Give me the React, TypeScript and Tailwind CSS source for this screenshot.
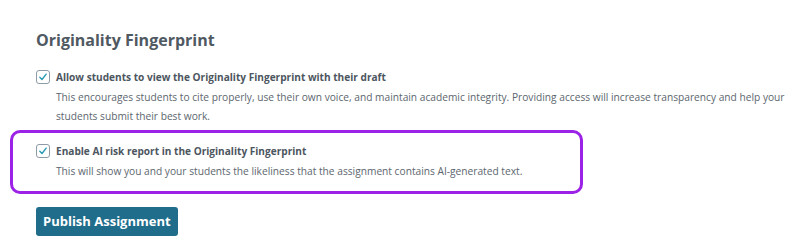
import React from "react";

function Check() {
  return (
    <span className="mt-[1px] flex h-[14px] w-[14px] shrink-0 items-center justify-center rounded-[3px] border border-[#8c9ba6] bg-white">
      <svg viewBox="0 0 12 12" className="h-[10px] w-[10px]">
        <path
          d="M2.2 6.4 L4.8 9 L9.8 2.6"
          fill="none"
          stroke="#2a9ab5"
          strokeWidth="1.7"
          strokeLinecap="round"
          strokeLinejoin="round"
        />
      </svg>
    </span>
  );
}

function Option({ title, children }: { title: string; children: React.ReactNode }) {
  return (
    <div className="flex gap-[6px]">
      <Check />
      <div>
        <p className="text-[10.1px] font-bold leading-[16px] text-[#4c5660]">{title}</p>
        <p className="mt-[3px] text-[10.2px] leading-[19px] text-[#5c666e]">{children}</p>
      </div>
    </div>
  );
}

export default function App() {
  return (
    <div
      className="h-[251px] w-[800px] bg-white pl-[10px] pt-[28px]"
      style={{ fontFamily: '"Open Sans", "Liberation Sans", sans-serif' }}
    >
      <h2 className="pl-[26px] text-[16px] font-bold leading-[24px] text-[#4f5962]">
        Originality Fingerprint
      </h2>
      <div className="mt-[17px] pl-[26px] pr-[8px]">
        <Option title="Allow students to view the Originality Fingerprint with their draft">
          This encourages students to cite properly, use their own voice, and maintain academic integrity. Providing access will increase transparency and help your students submit their best work.
        </Option>
      </div>
      <div className="mt-[4px] w-[573px] rounded-[10px] border-[3px] border-[#9b22e6] pb-[10px] pl-[23px] pt-[10px]">
        <Option title="Enable AI risk report in the Originality Fingerprint">
          This will show you and your students the likeliness that the assignment contains AI-generated text.
        </Option>
      </div>
      <button className="ml-[26px] mt-[13px] block h-[29px] rounded-[3px] bg-[#1f6c8b] px-[7px] text-[13px] font-bold text-white">
        Publish Assignment
      </button>
    </div>
  );
}
